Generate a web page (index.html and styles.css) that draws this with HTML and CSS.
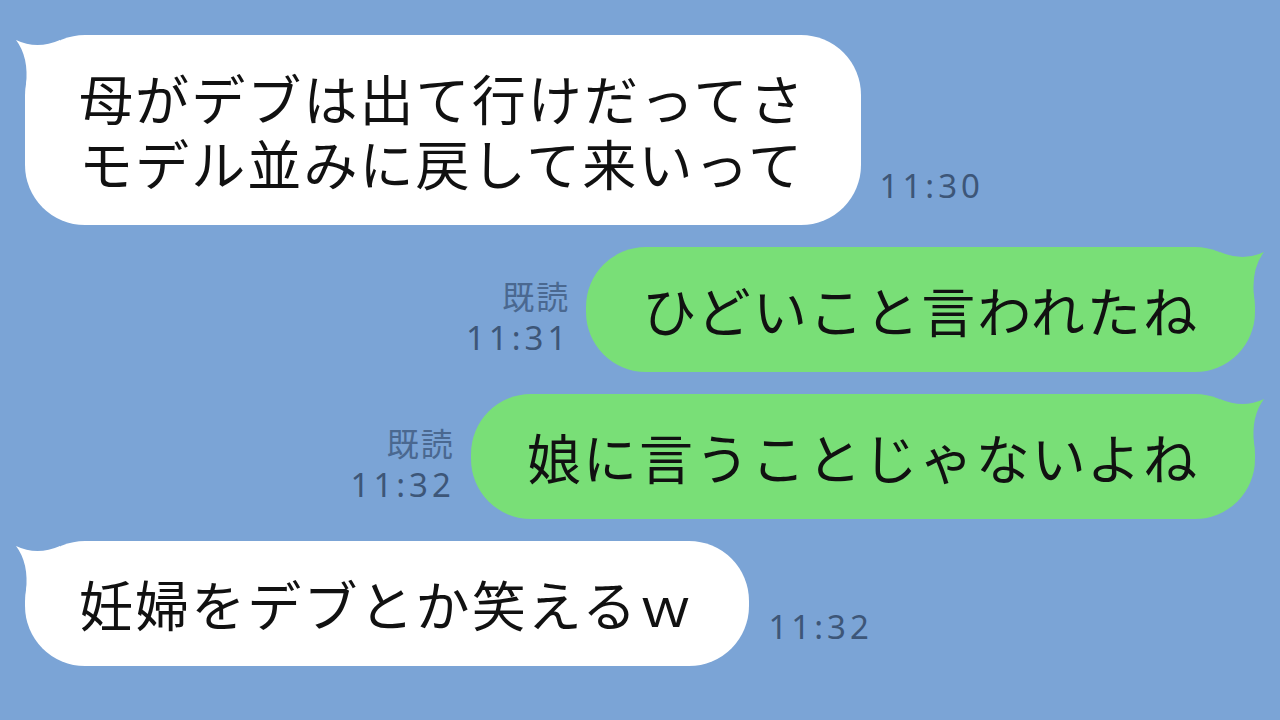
FILE: index.html
```html
<!DOCTYPE html>
<html lang="ja">
<head>
<meta charset="utf-8">
<title>トーク</title>
<link rel="stylesheet" href="styles.css">
</head>
<body>
<main class="chat">
  <div class="row row-in">
    <div class="bubble bubble-in">
      <svg class="tail tail-in" width="60" height="60" viewBox="0 0 60 60"><path d="M1 5 Q22 15 45 5 L45 50 L11 50 Q14 22 1 5 Z"/></svg>
      <p>母がデブは出て行けだってさ<br>モデル並みに戻して来いって</p>
    </div>
    <div class="meta"><span class="time">11:30</span></div>
  </div>

  <div class="row row-out">
    <div class="meta"><span class="read">既読</span><span class="time">11:31</span></div>
    <div class="bubble bubble-out">
      <svg class="tail tail-out" width="60" height="60" viewBox="0 0 60 60"><path d="M59 5 Q38 15 15 5 L15 50 L49 50 Q46 22 59 5 Z"/></svg>
      <p>ひどいこと言われたね</p>
    </div>
  </div>

  <div class="row row-out">
    <div class="meta"><span class="read">既読</span><span class="time">11:32</span></div>
    <div class="bubble bubble-out">
      <svg class="tail tail-out" width="60" height="60" viewBox="0 0 60 60"><path d="M59 5 Q38 15 15 5 L15 50 L49 50 Q46 22 59 5 Z"/></svg>
      <p>娘に言うことじゃないよね</p>
    </div>
  </div>

  <div class="row row-in">
    <div class="bubble bubble-in">
      <svg class="tail tail-in" width="60" height="60" viewBox="0 0 60 60"><path d="M1 5 Q22 15 45 5 L45 50 L11 50 Q14 22 1 5 Z"/></svg>
      <p>妊婦をデブとか笑えるｗ</p>
    </div>
    <div class="meta"><span class="time">11:32</span></div>
  </div>
</main>
</body>
</html>
```

FILE: styles.css
```css
html, body {
  margin: 0;
  padding: 0;
}

body {
  width: 1280px;
  height: 720px;
  overflow: hidden;
  background: #7ba4d6;
  font-family: "Noto Sans CJK JP", "Noto Sans", sans-serif;
}

.chat {
  display: flex;
  flex-direction: column;
  gap: 22px;
  padding: 35px 25px 0 25px;
}

.row {
  display: flex;
  align-items: flex-end;
}

.row-out {
  justify-content: flex-end;
}

.bubble {
  position: relative;
  border-radius: 60px;
  padding: 30px 55px 30px 54px;
}

.bubble p {
  position: relative;
  margin: 0;
  font-size: 54px;
  line-height: 65px;
  letter-spacing: 2.1px;
  color: #111;
  white-space: nowrap;
}

.bubble-in {
  background: #ffffff;
}

.bubble-out {
  background: #79df77;
  padding: 30px 56px 30px 56px;
}

.tail {
  position: absolute;
  top: 0;
}

.tail-in {
  left: -10px;
  fill: #ffffff;
}

.tail-out {
  right: -10px;
  fill: #79df77;
}

.meta {
  display: flex;
  flex-direction: column;
  color: #3d5678;
  font-family: "Noto Sans", "Noto Sans CJK JP", sans-serif;
  line-height: 1;
}

.row-in .meta {
  margin: 0 0 23px 19px;
}

.row-out .meta {
  align-items: flex-end;
  margin: 0 16px 18px 0;
}

.read {
  font-family: "Noto Sans CJK JP", sans-serif;
  font-size: 32px;
  letter-spacing: 2px;
  color: #4a6890;
  margin-bottom: 10px;
}

.time {
  font-size: 33px;
  letter-spacing: 4px;
}
```
